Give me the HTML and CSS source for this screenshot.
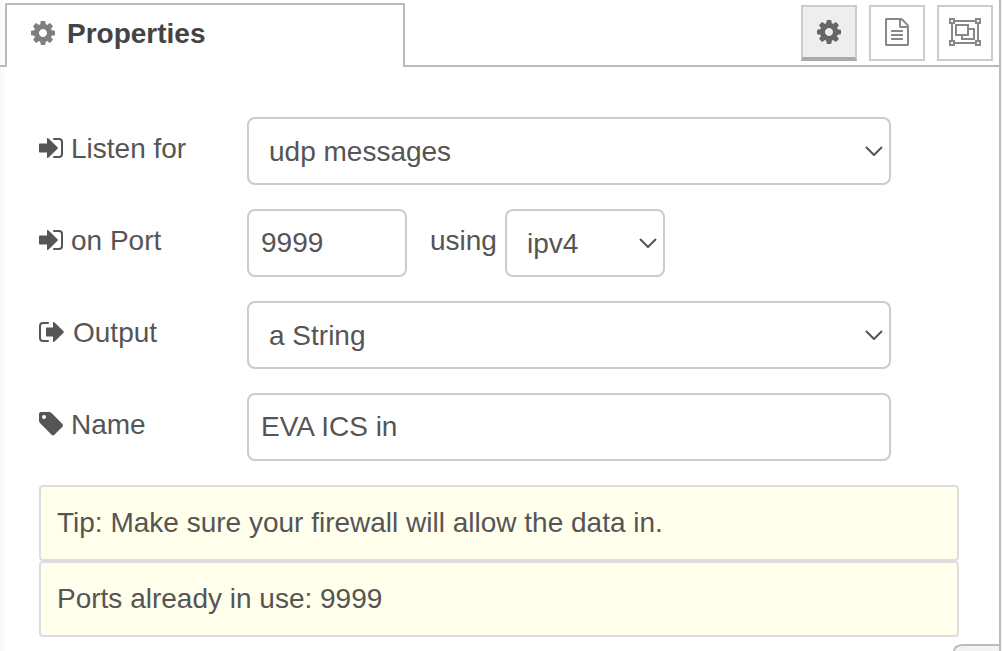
FILE: index.html
```html
<!DOCTYPE html>
<html lang="en">
<head>
<meta charset="utf-8">
<title>Properties</title>
<link rel="stylesheet" href="styles.css">
</head>
<body>
<svg class="sprite" aria-hidden="true">
  <symbol id="cog" viewBox="128 128 1536 1536"><path d="M1152 896q0-106-75-181t-181-75-181 75-75 181 75 181 181 75 181-75 75-181zm512-109v222q0 12-8 23t-20 13l-185 28q-19 54-39 91 35 50 107 138 10 12 10 25t-9 23q-27 37-99 108t-94 71q-12 0-26-9l-138-108q-44 23-91 38-16 136-29 186-7 28-36 28h-222q-14 0-24.500-8.500t-11.500-21.500l-28-184q-49-16-90-37l-141 107q-10 9-25 9-14 0-25-11-126-114-165-168-7-10-7-23 0-12 8-23 15-21 51-66.500t54-70.500q-27-50-41-99l-183-27q-13-2-21-12.500t-8-23.500v-222q0-12 8-23t19-13l186-28q14-46 39-92-40-57-107-138-10-12-10-24 0-10 9-23 26-36 98.500-107.500t94.500-71.500q13 0 26 10l138 107q44-23 91-38 16-136 29-186 7-28 36-28h222q14 0 24.500 8.500t11.500 21.500l28 184q49 16 90 37l142-107q9-9 24-9 13 0 25 10 129 119 165 170 7 8 7 22 0 12-8 23-15 21-51 66.500t-54 70.500q26 50 41 98l183 28q13 2 21 12.500t8 23.500z"/></symbol>
  <symbol id="sign-in" viewBox="0 0 24 20"><path d="M.8 5.500H8V.8q0-1.500 1.300-.5l9 8.700q1 1 0 2l-9 8.700Q8 20.700 8 19.200v-4.700H.8q-.8 0-.8-.8V6.300q0-.8.8-.8z"/><path d="M15 1h5q3 0 3 3v12q0 3-3 3h-5" fill="none" stroke="currentColor" stroke-width="2" stroke-linecap="round"/></symbol>
  <symbol id="sign-out" viewBox="0 0 26 20"><path d="M7.800 5.500H14V.8q0-1.500 1.300-.5l9 8.700q1 1 0 2l-9 8.700Q14 20.700 14 19.200v-4.700H7.800q-.8 0-.8-.8V6.300q0-.8.8-.8z"/><path d="M9 1H4Q1 1 1 4v12q0 3 3 3h5" fill="none" stroke="currentColor" stroke-width="2" stroke-linecap="round"/></symbol>
  <symbol id="tag" viewBox="0 0 24 24"><path fill-rule="evenodd" d="M2 0h8q1.600 0 2.800 1.200l10.600 10.700q1.200 1.400 0 2.800l-8 8.100q-1.400 1.200-2.800 0L1.200 11.300Q0 10 0 8.500V2Q0 0 2 0zm3 3a2 2 0 1 0 0 4 2 2 0 0 0 0-4z"/></symbol>
  <symbol id="chevron" viewBox="0 0 18 10"><path d="M1 1l8 8 8-8" fill="none" stroke="currentColor" stroke-width="2"/></symbol>
</svg>

<main class="panel">
  <header class="tabs">
    <div class="tab-lead"></div>
    <button class="tab" type="button"><svg class="icon-cog"><use href="#cog"/></svg>Properties</button>
    <nav class="tools" aria-label="Editor sections">
      <button class="tool tool-active" type="button" aria-label="Properties"><svg class="icon-cog"><use href="#cog"/></svg></button>
      <button class="tool" type="button" aria-label="Description"><svg class="icon-file" viewBox="128 0 1536 1792"><path d="M1596 380q28 28 48 76t20 88v1152q0 40-28 68t-68 28h-1344q-40 0-68-28t-28-68v-1600q0-40 28-68t68-28h896q40 0 88 20t76 48zm-444-244v376h376q-10-29-22-41l-313-313q-12-12-41-22zm384 1528v-1024h-416q-40 0-68-28t-28-68v-416h-768v1536h1280zm-1024-864q0-14 9-23t23-9h704q14 0 23 9t9 23v64q0 14-9 23t-23 9h-704q-14 0-23-9t-9-23v-64zm736 224q14 0 23 9t9 23v64q0 14-9 23t-23 9h-704q-14 0-23-9t-9-23v-64q0-14 9-23t23-9h704zm0 256q14 0 23 9t9 23v64q0 14-9 23t-23 9h-704q-14 0-23-9t-9-23v-64q0-14 9-23t23-9h704z"/></svg></button>
      <button class="tool" type="button" aria-label="Appearance"><svg class="icon-group" viewBox="0 0 32 28"><path d="M1 1h4v4H1zM27 1h4v4h-4zM1 23h4v4H1zM27 23h4v4h-4zM6 3h20M6 25h20M3 6v16M29 6v16M7 7h12v10H7zM20 11h5v10H13v-3"/></svg></button>
    </nav>
  </header>

  <form class="form">
    <div class="row">
      <label class="label" for="listen"><svg class="icon-in"><use href="#sign-in"/></svg>Listen for</label>
      <div class="select wide">
        <select id="listen"><option>udp messages</option><option>multicast messages</option></select>
        <svg class="chevron"><use href="#chevron"/></svg>
      </div>
    </div>
    <div class="row">
      <label class="label" for="port"><svg class="icon-in"><use href="#sign-in"/></svg>on Port</label>
      <input class="input short" id="port" type="text" value="9999">
      <label class="using" for="family">using</label>
      <div class="select short">
        <select id="family"><option>ipv4</option><option>ipv6</option></select>
        <svg class="chevron"><use href="#chevron"/></svg>
      </div>
    </div>
    <div class="row">
      <label class="label" for="output"><svg class="icon-out"><use href="#sign-out"/></svg>Output</label>
      <div class="select wide">
        <select id="output"><option>a String</option><option>a Buffer</option></select>
        <svg class="chevron"><use href="#chevron"/></svg>
      </div>
    </div>
    <div class="row">
      <label class="label" for="name"><svg class="icon-tag"><use href="#tag"/></svg>Name</label>
      <input class="input wide" id="name" type="text" value="EVA ICS in">
    </div>
    <div class="tips">
      <p class="tip">Tip: Make sure your firewall will allow the data in.</p>
      <p class="tip">Ports already in use: 9999</p>
    </div>
  </form>
  <div class="corner"></div>
</main>
</body>
</html>
```
FILE: styles.css
```css
* { box-sizing: border-box; }

body {
  margin: 0;
  background: #f3f3f3;
  color: #555;
  font-family: "Liberation Sans", Arial, sans-serif;
  font-size: 28px;
  line-height: 32px;
}

button, input, select { font: inherit; color: inherit; }
svg { flex: none; fill: currentColor; }
.sprite { display: none; }

.panel {
  position: relative;
  min-height: 100vh;
  margin-right: 1px;
  overflow: hidden;
  border-right: 2px solid #bbb;
  background: linear-gradient(to right, #f8f8f8, #fff 6px);
}

.tabs { display: flex; }
.tab-lead { width: 5px; border-bottom: 2px solid #bbb; }

.tab {
  display: flex;
  align-items: center;
  gap: 12px;
  width: 400px;
  height: 64px;
  margin-top: 3px;
  padding: 0 24px 4px;
  border: 2px solid #bbb;
  border-bottom: 0;
  background: #fff;
  color: #444;
  font-weight: bold;
}
.tab svg { margin-bottom: 2px; color: #7f7f7f; }

.tools {
  display: flex;
  flex: 1;
  justify-content: flex-end;
  gap: 12px;
  padding: 5px 6px 4px 0;
  border-bottom: 2px solid #bbb;
}
.tool {
  display: flex;
  align-items: center;
  justify-content: center;
  width: 56px;
  height: 56px;
  padding: 0 0 2px;
  border: 2px solid #ccc;
  background: #fff;
  color: #888;
}
.tool-active {
  padding: 0;
  border-bottom: 4px solid #aaa;
  background: #eee;
  color: #666;
}

.icon-cog, .icon-tag { width: 24px; height: 24px; }
.icon-file { width: 24px; height: 28px; }
.icon-group {
  width: 32px;
  height: 28px;
  fill: none;
  stroke: currentColor;
  stroke-width: 2;
}
.icon-in { width: 24px; height: 20px; }
.icon-out { width: 26px; height: 20px; }

.form { padding: 50px 40px 14px 39px; }
.row { display: flex; margin-bottom: 24px; }

.label, .using {
  display: flex;
  align-items: center;
  gap: 8px;
  padding-bottom: 5px;
}
.label { width: 208px; }
.label svg { margin-bottom: 2px; }
.using { padding-left: 23px; padding-right: 8px; }

.wide { width: 70%; }
.short { width: 160px; }

.input, .select select {
  height: 68px;
  border: 2px solid #ccc;
  border-radius: 8px;
  background: #fff;
}
.input { padding: 0 12px; }

.select { position: relative; }
.select select {
  width: 100%;
  padding: 2px 36px 0 20px;
  appearance: none;
}
.chevron {
  position: absolute;
  top: 29px;
  right: 8px;
  width: 18px;
  height: 10px;
  pointer-events: none;
}

.tip {
  margin: 0;
  padding: 20px 16px;
  border: 2px solid #ddd;
  border-radius: 4px;
  background: #ffffec;
}

.corner {
  position: absolute;
  right: 0;
  bottom: 0;
  width: 46px;
  height: 7px;
  border-top: 2px solid #bbb;
  border-left: 2px solid #bbb;
  border-top-left-radius: 10px 7px;
  background: #f3f3f3;
}
```
